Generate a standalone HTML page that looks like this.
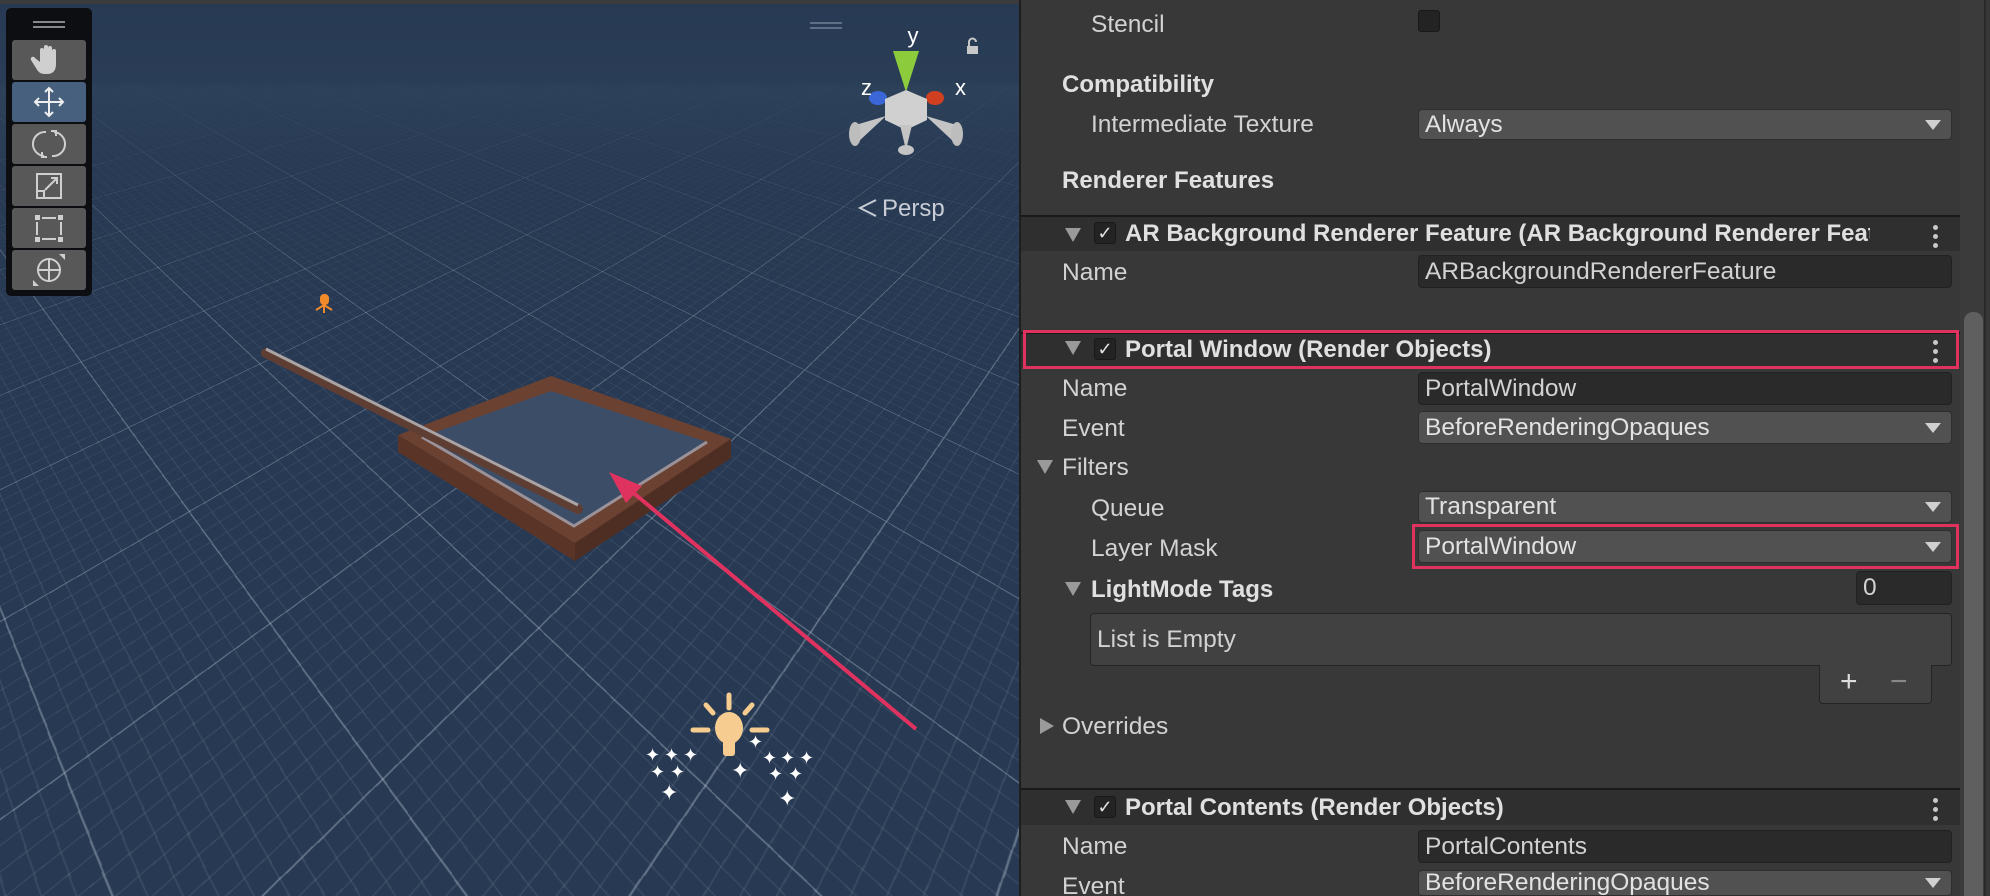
<!DOCTYPE html>
<html><head><meta charset="utf-8">
<style>
*{box-sizing:border-box;margin:0;padding:0}
html,body{width:1990px;height:896px;overflow:hidden}
body{background:#383838;font-family:"Liberation Sans",sans-serif;position:relative}
#scene{position:absolute;left:0;top:0;width:1019px;height:896px;background:#283a53;overflow:hidden;perspective:790px;perspective-origin:500px 88px}
#plane{position:absolute;left:-2500px;top:-3000px;width:6000px;height:4000px;transform-origin:50% 100%;transform:rotateX(72deg);overflow:hidden}
#grid{position:absolute;left:-2000px;top:-2000px;width:10000px;height:8000px;transform:rotate(-44deg);
background:
repeating-linear-gradient(0deg,rgba(200,210,225,.30) 0 2px,transparent 2px 280px),
repeating-linear-gradient(90deg,rgba(200,210,225,.30) 0 2px,transparent 2px 280px),
repeating-linear-gradient(0deg,rgba(200,210,225,.11) 0 1.5px,transparent 1.5px 28px),
repeating-linear-gradient(90deg,rgba(200,210,225,.11) 0 1.5px,transparent 1.5px 28px);}
#panel{position:absolute;left:1019px;top:0;width:971px;height:896px;background:#383838;border-left:2px solid #1e1e1e;color:#d2d2d2;font-size:24.5px;overflow:hidden}
.t{position:absolute;line-height:1;white-space:nowrap}
.b{font-weight:bold;color:#e0e0e0;font-size:24px}
.fld{position:absolute;background:#2a2a2a;border:1px solid #212121;border-radius:4px;color:#d2d2d2;font-size:24.5px;padding-left:6px;display:flex;align-items:center}
.dd{position:absolute;background:#515151;border:1px solid #2e2e2e;border-radius:4px;color:#e2e2e2;font-size:24.5px;padding-left:6px;display:flex;align-items:center}
.dd:after{content:"";position:absolute;right:10px;top:50%;margin-top:-5px;border-left:8px solid transparent;border-right:8px solid transparent;border-top:10px solid #d0d0d0}
.hdr{position:absolute;left:0;width:941px;background:#2f2f2f;border-top:2px solid #1a1a1a}
.tri{position:absolute;width:0;height:0;border-left:8px solid transparent;border-right:8px solid transparent;border-top:14px solid #9a9a9a}
.tri2{position:absolute;width:0;height:0;border-top:8px solid transparent;border-bottom:8px solid transparent;border-left:14px solid #9a9a9a}
.cb{position:absolute;width:22px;height:22px;background:#232323;border:1px solid #191919;border-radius:3px;color:#e0e0e0;font-size:18px;text-align:center;line-height:21px}
.keb{position:absolute;width:5px}
.keb i{display:block;width:5px;height:5px;border-radius:50%;background:#c8c8c8;margin-bottom:4px}
.red{position:absolute;border:3px solid #e0325f}
.tb{position:absolute;left:12px;width:74px;height:40px;background:#585858;border-radius:3px}
</style></head><body>
<div id="scene">
<div id="plane"><div id="grid"></div></div>
<svg width="1019" height="896" style="position:absolute;left:0;top:0">
<defs><linearGradient id="hz" x1="0" y1="0" x2="0" y2="1">
<stop offset="0" stop-color="#283a53"/><stop offset="0.09" stop-color="#2a3d56"/><stop offset="0.1" stop-color="#2e425b" stop-opacity="0.85"/><stop offset="0.2" stop-color="#2a3c55" stop-opacity="0.3"/><stop offset="0.32" stop-color="#283a53" stop-opacity="0"/></linearGradient></defs>
<rect width="1019" height="896" fill="url(#hz)"/>
<rect width="1019" height="4" fill="#3c3c3c"/>
<polygon points="398,435 575,543 575,561 398,452" fill="#5a3426"/>
<polygon points="575,543 731,439 731,458 575,561" fill="#4e2e22"/>
<polygon points="398,435 551,376 731,439 575,543" fill="#6b4232"/>
<polygon points="422,437 551,391 707,442 574,526" fill="#3c4d68"/>
<polyline points="422,437 574,526 707,442" fill="none" stroke="#9a9298" stroke-width="3"/>
<line x1="266" y1="353" x2="578" y2="509" stroke="#5e3e33" stroke-width="10" stroke-linecap="round"/>
<line x1="266" y1="349" x2="578" y2="505" stroke="#a9a3a6" stroke-width="3"/>
<line x1="916" y1="729" x2="624" y2="485" stroke="#e0325f" stroke-width="4"/>
<polygon points="609,472 642,486 626,503" fill="#e0325f"/>
<g fill="#f08a2a" stroke="#f08a2a" stroke-width="2"><rect x="321" y="295" width="7" height="9" rx="3"/><line x1="324" y1="304" x2="324" y2="313"/><line x1="324" y1="305" x2="316" y2="310"/><line x1="324" y1="305" x2="332" y2="310"/></g>
<g stroke="#f6cc90" stroke-width="5" stroke-linecap="round"><line x1="729" y1="695" x2="729" y2="708"/><line x1="693" y1="730" x2="708" y2="730"/><line x1="752" y1="730" x2="767" y2="730"/><line x1="706" y1="705" x2="713" y2="713"/><line x1="752" y1="705" x2="745" y2="713"/></g>
<ellipse cx="729" cy="728" rx="14" ry="16" fill="#f6cc90"/><rect x="723" y="738" width="12" height="18" rx="3" fill="#f6cc90"/>
<g fill="#fff" font-size="18" font-family="DejaVu Sans">
<text x="645" y="761">✦</text><text x="664" y="761">✦</text><text x="683" y="761">✦</text>
<text x="650" y="778">✦</text><text x="670" y="778">✦</text><text x="660" y="800" font-size="22">✦</text>
<text x="731" y="778" font-size="22">✦</text><text x="748" y="748">✦</text>
<text x="762" y="764">✦</text><text x="780" y="764">✦</text><text x="799" y="764">✦</text>
<text x="768" y="780">✦</text><text x="788" y="780">✦</text><text x="778" y="806" font-size="22">✦</text>
</g>
<g>
<polygon points="893,51 919,51 906,92" fill="#8ccc3c"/>
<ellipse cx="878" cy="98" rx="9" ry="7" fill="#3a66d8"/>
<ellipse cx="935" cy="98" rx="9" ry="7" fill="#d04020"/>
<polygon points="906,90 927,99 927,120 906,130 885,120 885,99" fill="#d0d0d0"/>
<polygon points="886,116 852,126 858,142" fill="#c4c4c4"/>
<polygon points="926,116 960,126 954,142" fill="#c4c4c4"/>
<polygon points="900,125 912,125 906,150" fill="#c4c4c4"/><ellipse cx="906" cy="150" rx="8" ry="5" fill="#c4c4c4"/>
<ellipse cx="855" cy="134" rx="6" ry="12" fill="#bdbdbd"/><ellipse cx="957" cy="134" rx="6" ry="12" fill="#bdbdbd"/>
<text x="913" y="43" fill="#fff" font-size="22" font-family="Liberation Sans" text-anchor="middle">y</text>
<text x="861" y="95" fill="#fff" font-size="22" font-family="Liberation Sans">z</text>
<text x="955" y="95" fill="#fff" font-size="22" font-family="Liberation Sans">x</text>
<rect x="967" y="46" width="11" height="8" fill="#c8c8c8"/><path d="M969 46 v-4 a3.5 3.5 0 0 1 7 0" fill="none" stroke="#c8c8c8" stroke-width="2"/>
<line x1="810" y1="23" x2="842" y2="23" stroke="#5e6e84" stroke-width="2"/><line x1="810" y1="28" x2="842" y2="28" stroke="#5e6e84" stroke-width="2"/>
<path d="M876 200 L860 208 L876 216" fill="none" stroke="#c8ccd4" stroke-width="2"/>
<text x="882" y="216" fill="#c8ccd4" font-size="24" font-family="Liberation Sans">Persp</text>
</g>
</svg>
<div style="position:absolute;left:6px;top:8px;width:86px;height:288px;background:#0c0e12;border-radius:5px"></div>
<div style="position:absolute;left:33px;top:21px;width:32px;height:2px;background:#888"></div>
<div style="position:absolute;left:33px;top:26px;width:32px;height:2px;background:#888"></div>
<div class="tb" style="top:40px"><svg width="74" height="40"><path d="M28 22 v-12 a2 2 0 0 1 4 0 v8 v-11 a2 2 0 0 1 4 0 v11 v-10 a2 2 0 0 1 4 0 v10 v-7 a2 2 0 0 1 4 0 v13 q0 10 -9 10 h-3 q-5 0 -8 -6 l-5 -8 a2 2 0 0 1 4 -2 z" fill="#cfcfcf"/></svg></div>
<div class="tb" style="top:82px;background:#46607e"><svg width="74" height="40"><g stroke="#eee" stroke-width="2" fill="none"><line x1="37" y1="6" x2="37" y2="34"/><line x1="23" y1="20" x2="51" y2="20"/><path d="M33 10 l4-4 4 4 M33 30 l4 4 4-4 M27 16 l-4 4 4 4 M47 16 l4 4 -4 4"/></g></svg></div>
<div class="tb" style="top:124px"><svg width="74" height="40"><g stroke="#cfcfcf" stroke-width="2" fill="none"><path d="M34 8 a12 12 0 0 0 -2 24 M40 32 a12 12 0 0 0 2 -24 M30 28 v5 h5 M44 12 v-5 h-5"/></g></svg></div>
<div class="tb" style="top:166px"><svg width="74" height="40"><g stroke="#cfcfcf" stroke-width="2" fill="none"><rect x="25" y="8" width="24" height="24"/><rect x="25" y="25" width="7" height="7"/><path d="M33 24 l12 -12 M39 12 h6 v6"/></g></svg></div>
<div class="tb" style="top:208px"><svg width="74" height="40"><g fill="#cfcfcf"><rect x="23" y="7" width="5" height="5"/><rect x="46" y="7" width="5" height="5"/><rect x="23" y="29" width="5" height="5"/><rect x="46" y="29" width="5" height="5"/><rect x="30" y="9" width="14" height="2"/><rect x="30" y="30" width="14" height="2"/><rect x="24" y="14" width="2" height="13"/><rect x="48" y="14" width="2" height="13"/></g></svg></div>
<div class="tb" style="top:250px"><svg width="74" height="40"><g stroke="#cfcfcf" stroke-width="2" fill="none"><circle cx="37" cy="20" r="11"/><line x1="37" y1="8" x2="37" y2="32"/><line x1="25" y1="20" x2="49" y2="20"/></g><polygon points="21,36 27,36 21,30" fill="#cfcfcf"/><polygon points="53,4 47,4 53,10" fill="#cfcfcf"/></svg></div>
</div>

<div id="panel">
<div class="t" style="left:70px;top:13px">Stencil</div>
<div class="cb" style="left:397px;top:10px"></div>
<div class="t b" style="left:41px;top:73px">Compatibility</div>
<div class="t" style="left:70px;top:113px">Intermediate Texture</div>
<div class="dd" style="left:397px;top:109px;width:534px;height:31px">Always</div>
<div class="t b" style="left:41px;top:169px">Renderer Features</div>

<div class="hdr" style="top:215px;height:36px"></div>
<div class="tri" style="left:44px;top:228px"></div>
<div class="cb" style="left:73px;top:222px">✓</div>
<div class="t b" style="left:104px;top:222px;width:745px;overflow:hidden">AR Background Renderer Feature (AR Background Renderer Feature)</div>
<div class="keb" style="left:912px;top:225px"><i></i><i></i><i></i></div>
<div class="t" style="left:41px;top:261px">Name</div>
<div class="fld" style="left:397px;top:255px;width:534px;height:33px">ARBackgroundRendererFeature</div>

<div class="hdr" style="top:332px;height:35px"></div>
<div class="tri" style="left:44px;top:341px"></div>
<div class="cb" style="left:73px;top:338px">✓</div>
<div class="t b" style="left:104px;top:338px">Portal Window (Render Objects)</div>
<div class="keb" style="left:912px;top:340px"><i></i><i></i><i></i></div>
<div class="red" style="left:2px;top:330px;width:936px;height:39px"></div>
<div class="t" style="left:41px;top:377px">Name</div>
<div class="fld" style="left:397px;top:372px;width:534px;height:33px">PortalWindow</div>
<div class="t" style="left:41px;top:417px">Event</div>
<div class="dd" style="left:397px;top:411px;width:534px;height:33px">BeforeRenderingOpaques</div>
<div class="tri" style="left:16px;top:460px"></div>
<div class="t" style="left:41px;top:456px">Filters</div>
<div class="t" style="left:70px;top:497px">Queue</div>
<div class="dd" style="left:397px;top:491px;width:534px;height:32px">Transparent</div>
<div class="t" style="left:70px;top:537px">Layer Mask</div>
<div class="dd" style="left:397px;top:530px;width:534px;height:33px">PortalWindow</div>
<div class="red" style="left:391px;top:524px;width:547px;height:45px"></div>
<div class="tri" style="left:44px;top:582px"></div>
<div class="t b" style="left:70px;top:578px">LightMode Tags</div>
<div class="fld" style="left:835px;top:571px;width:96px;height:34px">0</div>
<div class="fld" style="left:69px;top:613px;width:862px;height:53px;background:#414141;border-color:#242424">List is Empty</div>
<div style="position:absolute;left:798px;top:665px;width:113px;height:39px;background:#414141;border:1px solid #242424;border-top:none;border-radius:0 0 4px 4px;font-size:30px;color:#ddd"><span style="position:absolute;left:20px;top:0">+</span><span style="position:absolute;left:70px;top:0;color:#888">−</span></div>
<div class="tri2" style="left:19px;top:718px"></div>
<div class="t" style="left:41px;top:715px">Overrides</div>

<div class="hdr" style="top:788px;height:37px"></div>
<div class="tri" style="left:44px;top:800px"></div>
<div class="cb" style="left:73px;top:796px">✓</div>
<div class="t b" style="left:104px;top:796px">Portal Contents (Render Objects)</div>
<div class="keb" style="left:912px;top:798px"><i></i><i></i><i></i></div>
<div class="t" style="left:41px;top:835px">Name</div>
<div class="fld" style="left:397px;top:830px;width:534px;height:33px">PortalContents</div>
<div class="t" style="left:41px;top:875px">Event</div>
<div class="dd" style="left:397px;top:870px;width:534px;height:26px">BeforeRenderingOpaques</div>

<div style="position:absolute;left:939px;top:0;width:26px;height:896px;background:#3b3b3b;border-right:2px solid #2a2a2a"></div>
<div style="position:absolute;left:943px;top:312px;width:19px;height:584px;background:#5f5f5f;border-radius:9px 9px 0 0"></div>
</div>
</body></html>
